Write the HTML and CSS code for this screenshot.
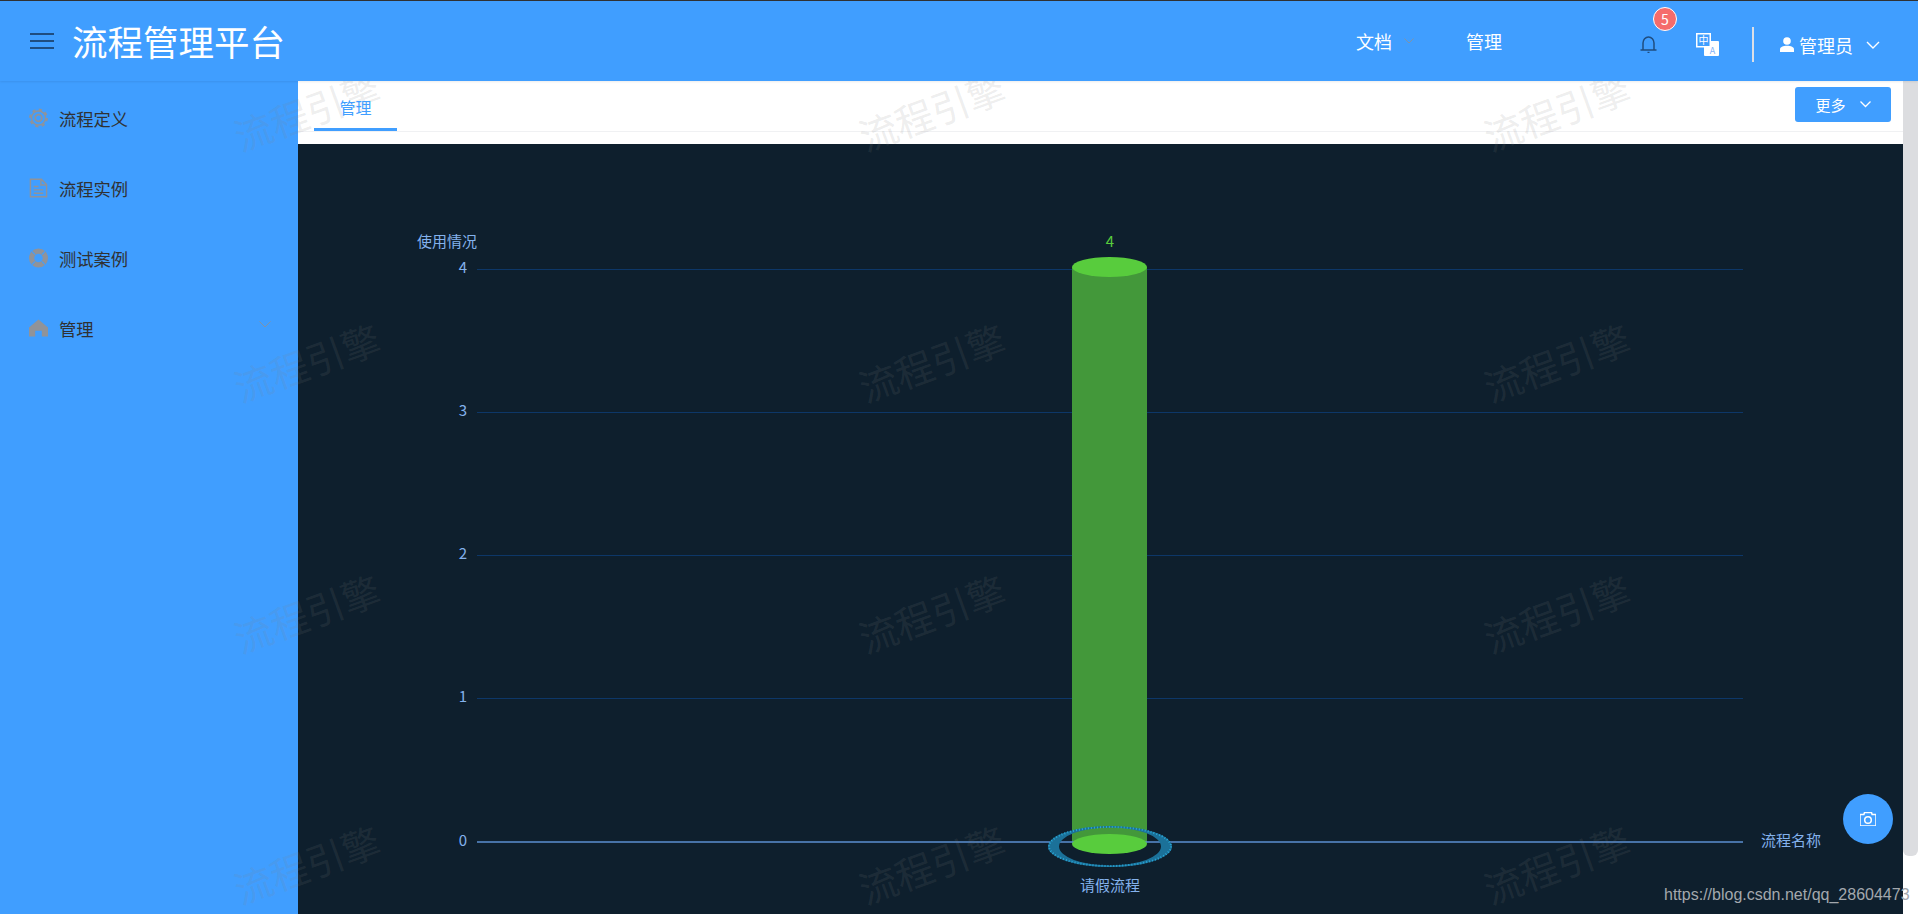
FILE: index.html
```html
<!DOCTYPE html>
<html lang="zh-CN">
<head>
  <meta charset="UTF-8" />
  <meta name="viewport" content="width=device-width, initial-scale=1.0" />
  <title>流程管理平台</title>
  <link rel="stylesheet" href="styles.css">
</head>
<body>
  <header class="top-bar">
    <svg class="hamburger" viewBox="0 0 24 16"><path d="M0 1h24M0 8h24M0 15h24"/></svg>
    <div class="brand">流程管理平台</div>
    <nav class="top-nav">
      <span class="nav-item">文档<svg class="nav-caret" viewBox="0 0 10 6"><path d="M0.5 0.5L5 5l4.5-4.5"/></svg></span>
      <span class="nav-item nav-plain">管理</span>
    </nav>
    <div class="bell-wrap">
      <svg class="bell" viewBox="0 0 17 17"><path d="M3 14V7a5.500 6 0 0 1 11 0v7M0.500 14h16"/><path d="M7.500 16.500h2"/></svg>
      <span class="badge">5</span>
    </div>
    <svg class="lang" viewBox="0 0 23 23">
      <rect x="8" y="8" width="15" height="15" rx="1" fill="#fff"/>
      <text x="16.500" y="20.500" class="lang-a">A</text>
      <rect x="0.750" y="0.750" width="13.500" height="13" fill="#409eff" stroke="#fff" stroke-width="1.500"/>
      <text x="7.500" y="11" class="lang-zh">中</text>
    </svg>
    <div class="divider"></div>
    <div class="user">
      <svg class="user-icon" viewBox="0 0 14 15"><circle cx="7" cy="4" r="3.800"/><path d="M0 15v-2.500C0 10 3 8.800 7 8.800s7 1.200 7 3.700V15z"/></svg>
      <span>管理员</span>
      <svg class="user-caret" viewBox="0 0 14 8"><path d="M1 1l6 6 6-6"/></svg>
    </div>
  </header>

  <div class="main-row">
    <aside class="side-menu">
      <div class="menu-item">
        <svg class="menu-icon" viewBox="0 0 20 20"><circle class="line" cx="10" cy="10" r="7.400"/><circle class="teeth" cx="10" cy="10" r="8.800"/><circle class="line thick" cx="10" cy="10" r="3.500"/></svg>
        <span>流程定义</span>
      </div>
      <div class="menu-item">
        <svg class="menu-icon" viewBox="0 0 20 20"><path class="line" d="M1.500 0.800h11.500l5.500 5.500v12.900h-17zM12.500 0.800v6h6M5 8.500h5M5 12h10M5 15.500h10"/></svg>
        <span>流程实例</span>
      </div>
      <div class="menu-item">
        <svg class="menu-icon" viewBox="0 0 20 20"><path class="solid" d="M10 0a10 10 0 1 0 0 20a10 10 0 1 0 0-20zM10 5.500a4.500 4.500 0 1 1 0 9a4.500 4.500 0 1 1 0-9z" fill-rule="evenodd"/><path class="gap" d="M3 3l3.500 3.500M17 3l-3.500 3.500M3 17l3.500-3.500M17 17l-3.500-3.500"/></svg>
        <span>测试案例</span>
      </div>
      <div class="menu-item">
        <svg class="menu-icon" viewBox="0 0 20 20"><path class="solid" d="M10 1L0 9.500V19h6.500v-6h7v6H20V9.500z"/></svg>
        <span>管理</span>
        <svg class="menu-caret" viewBox="0 0 12 7"><path d="M0.500 0.500L6 6l5.500-5.500"/></svg>
      </div>
    </aside>

    <section class="content">
      <div class="tab-bar">
        <div class="tab-active">管理</div>
        <button class="more-btn">更多<svg viewBox="0 0 11 7"><path d="M0.500 0.500L5.500 5.500l5-5"/></svg></button>
      </div>
      <div class="chart-panel">
        <svg class="chart" viewBox="298 144 1605 770">
          <g class="grid-lines">
            <path d="M477 269.500H1743M477 412.500H1743M477 555.500H1743M477 698.500H1743"/>
          </g>
          <rect x="1072" y="267" width="75" height="577" fill="#43983a"/>
          <ellipse cx="1109.500" cy="267" rx="37.500" ry="10" fill="#58cc3d"/>
          <path class="axis-line" d="M477 842H1743"/>
          <path class="ring" fill-rule="evenodd" d="M1048 846.500a62 20.500 0 1 0 124 0a62 20.500 0 1 0-124 0zM1059 846.500a51 19 0 1 0 102 0a51 19 0 1 0-102 0z"/>
          <ellipse class="ring-ticks" cx="1110" cy="846.500" rx="61" ry="19.500"/>
          <ellipse cx="1109.500" cy="844" rx="37.500" ry="10" fill="#58cc3d"/>

          <text class="axis-text" x="417" y="247">使用情况</text>
          <text class="axis-text" x="467" y="273" text-anchor="end">4</text>
          <text class="axis-text" x="467" y="416" text-anchor="end">3</text>
          <text class="axis-text" x="467" y="559" text-anchor="end">2</text>
          <text class="axis-text" x="467" y="702" text-anchor="end">1</text>
          <text class="axis-text" x="467" y="846" text-anchor="end">0</text>
          <text class="value-text" x="1110" y="247" text-anchor="middle">4</text>
          <text class="axis-text" x="1110" y="891" text-anchor="middle">请假流程</text>
          <text class="axis-text" x="1761" y="846">流程名称</text>
        </svg>
      </div>
    </section>

    <div class="scroll-track"><div class="scroll-thumb"></div></div>

    <div class="watermarks">
      <span>流程引擎</span><span>流程引擎</span><span>流程引擎</span>
      <span>流程引擎</span><span>流程引擎</span><span>流程引擎</span>
      <span>流程引擎</span><span>流程引擎</span><span>流程引擎</span>
      <span>流程引擎</span><span>流程引擎</span><span>流程引擎</span>
    </div>

    <button class="camera-btn">
      <svg viewBox="0 0 16 14"><path d="M4.500 0.500h7l.6 2H16V14H0V2.500h3.900z"/><circle cx="8" cy="8" r="3.300"/></svg>
    </button>
    <div class="source-url">https://blog.csdn.net/qq_28604473</div>
  </div>
</body>
</html>
```

FILE: styles.css
```css
* {
  margin: 0;
  padding: 0;
  box-sizing: border-box;
  font-family: "Noto Sans CJK SC", "Liberation Sans", sans-serif;
}

html, body {
  height: 100%;
  overflow: hidden;
}

body {
  display: flex;
  flex-direction: column;
  background-color: #fff;
  border-top: 1px solid #303133;
}

.top-bar {
  height: 80px;
  flex-shrink: 0;
  display: flex;
  align-items: center;
  background-color: #409eff;
  color: #fff;
  position: relative;
  z-index: 3;
  box-shadow: 0 1px 2px rgba(0,0,0,0.08);
}

.hamburger {
  width: 24px;
  height: 16px;
  margin-left: 30px;
  fill: none;
  stroke: #1f4d80;
  stroke-width: 2;
}

.brand {
  margin-left: 18px;
  font-size: 35.500px;
  line-height: 80px;
}

.top-nav {
  margin-left: auto;
  display: flex;
  align-items: center;
  height: 80px;
}

.nav-item {
  font-size: 18px;
  display: flex;
  align-items: center;
}

.nav-plain {
  margin-left: 52px;
}

.nav-caret {
  width: 10px;
  height: 6px;
  margin-left: 12px;
  fill: none;
  stroke: #7f93a8;
}

.bell-wrap {
  position: relative;
  width: 17px;
  height: 17px;
  margin: 6px 0 0 138px;
}

.bell {
  display: block;
  width: 17px;
  height: 17px;
  fill: none;
  stroke: #1f4d80;
  stroke-width: 1.500;
}

.badge {
  position: absolute;
  top: -29px;
  left: 13px;
  width: 24px;
  height: 24px;
  border-radius: 50%;
  border: 1px solid #fff;
  background-color: #f56c6c;
  font-size: 14px;
  line-height: 22px;
  text-align: center;
}

.lang {
  width: 23px;
  height: 23px;
  margin: 6px 0 0 39px;
}

.lang-a {
  font-size: 9px;
  fill: #7fb0f5;
  text-anchor: middle;
}

.lang-zh {
  font-size: 10px;
  fill: #fff;
  text-anchor: middle;
}

.divider {
  width: 2px;
  height: 35px;
  margin: 7px 0 0 33px;
  background-color: #dcdfe6;
}

.user {
  display: flex;
  align-items: center;
  margin: 7px 38px 0 26px;
  font-size: 18px;
}

.user-icon {
  width: 14px;
  height: 15px;
  margin-right: 5px;
  fill: #fff;
}

.user-caret {
  width: 14px;
  height: 8px;
  margin-left: 13px;
  fill: none;
  stroke: #fff;
  stroke-width: 1.400;
}

.main-row {
  flex: 1;
  display: flex;
  min-height: 0;
  position: relative;
  overflow: hidden;
}

.side-menu {
  width: 298px;
  flex-shrink: 0;
  padding-top: 2px;
  background-color: #409eff;
}

.menu-item {
  height: 70px;
  padding-left: 29px;
  display: flex;
  align-items: center;
  font-size: 17.300px;
  color: #303133;
}

.menu-item span {
  margin-left: 11px;
}

.menu-icon {
  width: 19px;
  height: 20px;
}

.menu-icon .line {
  fill: none;
  stroke: #909399;
  stroke-width: 1.500;
}

.menu-icon .thick {
  stroke-width: 1.800;
}

.menu-icon .teeth {
  fill: none;
  stroke: #909399;
  stroke-width: 2.200;
  stroke-dasharray: 3.400 3.510;
}

.menu-icon .solid {
  fill: #909399;
}

.menu-icon .gap {
  fill: none;
  stroke: #409eff;
  stroke-width: 1.200;
}

.menu-caret {
  width: 12px;
  height: 7px;
  margin: -8px 27px 0 auto;
  fill: none;
  stroke: #7f93a8;
}

.content {
  flex: 1;
  min-width: 0;
  display: flex;
  flex-direction: column;
}

.tab-bar {
  height: 63px;
  flex-shrink: 0;
  display: flex;
  justify-content: space-between;
  align-items: flex-start;
  padding: 6px 12px 0 16px;
  position: relative;
}

.tab-bar::after {
  content: "";
  position: absolute;
  left: 0;
  right: 0;
  top: 50px;
  border-top: 1px solid #f0f1f3;
}

.tab-active {
  width: 83px;
  height: 44px;
  border-bottom: 3px solid #409eff;
  text-align: center;
  font-size: 16px;
  line-height: 40px;
  color: #409eff;
  position: relative;
  z-index: 1;
}

.more-btn {
  width: 96px;
  height: 35px;
  display: flex;
  align-items: center;
  justify-content: center;
  gap: 14px;
  border: none;
  border-radius: 3px;
  background-color: #409eff;
  color: #fff;
  font-size: 15px;
}

.more-btn svg {
  width: 11px;
  height: 7px;
  fill: none;
  stroke: #fff;
  stroke-width: 1.300;
}

.chart-panel {
  flex: 1;
  min-height: 0;
  background-color: #0e1f2d;
}

.chart {
  display: block;
  width: 100%;
  height: 100%;
}

.grid-lines path {
  fill: none;
  stroke: #0d3768;
}

.axis-line {
  fill: none;
  stroke: #5b8fd0;
  stroke-width: 1.500;
}

.ring {
  fill: #1b7199;
}

.ring-ticks {
  fill: none;
  stroke: #2aa8d8;
  stroke-width: 2;
  stroke-dasharray: 1 2;
}

.axis-text {
  font-size: 15px;
  fill: #84b2ec;
}

.value-text {
  font-size: 15px;
  fill: #58cc3d;
}

.scroll-track {
  width: 15px;
  flex-shrink: 0;
  background-color: #fff;
}

.scroll-thumb {
  height: 775px;
  background-color: #dcdde0;
  border-radius: 0 0 6px 6px;
}

.watermarks {
  position: absolute;
  top: -96px;
  left: -6px;
  display: grid;
  grid-template-columns: repeat(3, 625px);
  grid-auto-rows: 251px;
  pointer-events: none;
}

.watermarks span {
  display: flex;
  align-items: center;
  justify-content: center;
  font-size: 38px;
  color: rgba(128,128,128,0.15);
  transform: rotate(-20deg);
}

.camera-btn {
  position: absolute;
  right: 25px;
  bottom: 70px;
  width: 50px;
  height: 50px;
  border: none;
  border-radius: 50%;
  background-color: #409eff;
  display: flex;
  align-items: center;
  justify-content: center;
}

.camera-btn svg {
  width: 16px;
  height: 14px;
  fill: none;
  stroke: #fff;
  stroke-width: 1.500;
}

.source-url {
  position: absolute;
  left: 1664px;
  top: 804px;
  font-family: "Liberation Sans", sans-serif;
  font-size: 16px;
  line-height: 20px;
  color: #a3a8ad;
  white-space: nowrap;
}
```
